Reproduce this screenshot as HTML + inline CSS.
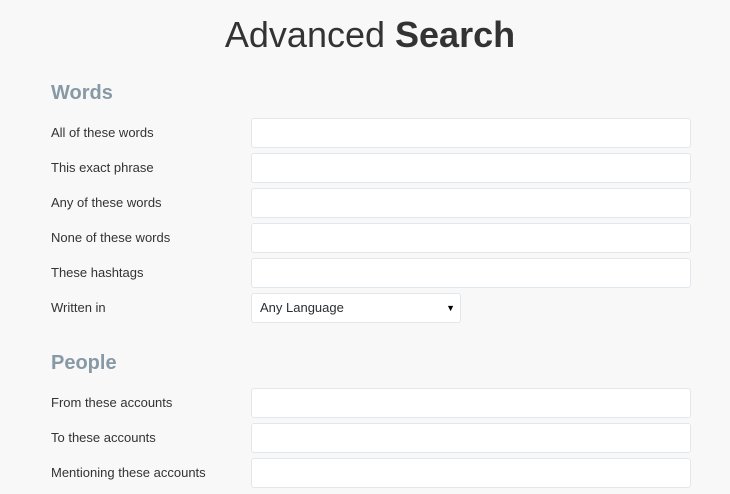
<!DOCTYPE html>
<html><head><style>
body{margin:0;background:#f8f8f8;font-family:"Liberation Sans",sans-serif;width:730px;height:494px;overflow:hidden;position:relative;color:#333}
h1{position:absolute;top:13px;left:0;width:730px;padding-left:10px;box-sizing:border-box;text-align:center;margin:0;font-size:36px;font-weight:normal;color:#333;line-height:44px}
h1 b{font-weight:bold}
h2{position:absolute;left:51px;margin:0;font-size:20px;color:#8899a6;font-weight:bold;line-height:24px}
.l{position:absolute;left:51px;font-size:13px;line-height:16px;color:#333}
.i{position:absolute;left:251px;width:438px;height:28px;background:#fff;border:1px solid #e1e8ed;border-radius:3px}
.s{position:absolute;left:251px;width:208px;height:28px;background:#fff;border:1px solid #e1e8ed;border-radius:3px;font-size:13px;line-height:28px}
.s span{position:absolute;left:8px;color:#292f33}
.s i{position:absolute;right:5px;top:0;font-style:normal;font-size:9px;color:#000}
</style></head><body>
<h1>Advanced <b>Search</b></h1>
<h2 style="top:81px">Words</h2>
<div class="l" style="top:125px">All of these words</div><div class="i" style="top:118px"></div>
<div class="l" style="top:160px">This exact phrase</div><div class="i" style="top:153px"></div>
<div class="l" style="top:195px">Any of these words</div><div class="i" style="top:188px"></div>
<div class="l" style="top:230px">None of these words</div><div class="i" style="top:223px"></div>
<div class="l" style="top:265px">These hashtags</div><div class="i" style="top:258px"></div>
<div class="l" style="top:300px">Written in</div><div class="s" style="top:293px"><span>Any Language</span><i>▼</i></div>
<h2 style="top:351px">People</h2>
<div class="l" style="top:395px">From these accounts</div><div class="i" style="top:388px"></div>
<div class="l" style="top:430px">To these accounts</div><div class="i" style="top:423px"></div>
<div class="l" style="top:465px">Mentioning these accounts</div><div class="i" style="top:458px"></div>
</body></html>
